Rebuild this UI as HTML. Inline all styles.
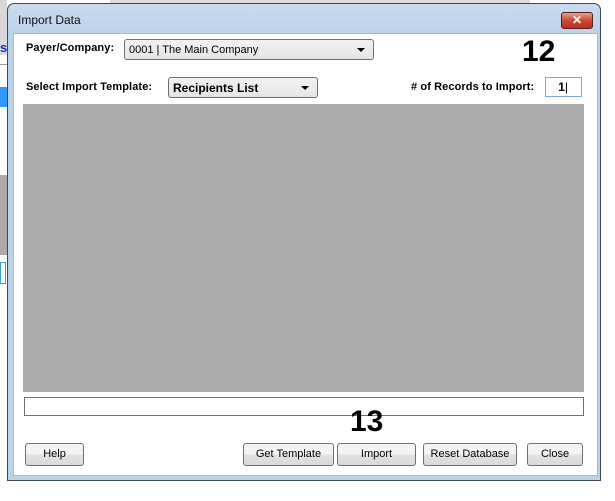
<!DOCTYPE html>
<html><head><style>
body{margin:0;width:615px;height:501px;position:relative;overflow:hidden;background:#fff;font-family:"Liberation Sans",sans-serif;}
.a{position:absolute;}
.win{left:7px;top:3px;width:594px;height:478px;border:1px solid #3a4a5a;border-radius:7px 7px 0 0;background:linear-gradient(#c9dbee,#bcd2ea 30px,#bdd3ea);box-sizing:border-box;}
.content{left:13px;top:33px;width:585px;height:443px;background:#fff;border:1px solid #a6b9cf;box-sizing:border-box;}
.lbl{font-size:11px;font-weight:bold;color:#000;letter-spacing:0.1px;}
.dd{border:1px solid #707070;border-radius:3px;background:linear-gradient(#f2f2f2,#e5e5e5);box-sizing:border-box;font-size:11px;padding:4px 4px;}
.arr{position:absolute;right:8px;top:8px;width:0;height:0;border-left:4px solid transparent;border-right:4px solid transparent;border-top:4px solid #000;}
.btn{border:1px solid #707070;border-radius:3px;background:linear-gradient(#f4f4f4 50%,#e2e2e2 50%,#dadada);box-sizing:border-box;font-size:11px;text-align:center;line-height:21px;height:23px;top:443px;}
.big{font-weight:bold;font-size:30px;color:#000;}
</style></head><body>
<div class="a" style="left:0;top:0;width:7px;height:55px;background:#d8d8d8"></div>
<div class="a" style="left:0;top:40px;width:6px;font-size:13px;color:#1030d0;font-weight:bold">s</div>
<div class="a" style="left:0;top:64px;width:7px;height:22px;background:#fff;border-top:1px solid #999"></div>
<div class="a" style="left:0;top:87px;width:7px;height:20px;background:#3399ff"></div>
<div class="a" style="left:0;top:175px;width:7px;height:80px;background:#aaa"></div>
<div class="a" style="left:0;top:262px;width:6px;height:22px;border:1px solid #3aa0d8;box-sizing:border-box"></div>
<div class="a" style="left:110px;top:0;width:420px;height:4px;background:#ddd"></div>
<div class="a win"></div>
<div class="a" style="left:18px;top:13px;font-size:12px;color:#111">Import Data</div>
<div class="a" style="left:561px;top:12px;width:32px;height:17px;border:1px solid #5a2020;border-radius:3px;background:linear-gradient(#e8a090,#c84a36 50%,#b83020);box-sizing:border-box;color:#fff;font-weight:bold;font-size:12px;text-align:center;line-height:15px">✕</div>
<div class="a content"></div>
<div class="a lbl" style="left:26px;top:42px">Payer/Company:</div>
<div class="a dd" style="left:124px;top:39px;width:250px;height:21px">0001 | The Main Company<div class="arr"></div></div>
<div class="a big" style="left:522px;top:35px">12</div>
<div class="a lbl" style="left:26px;top:81px">Select Import Template:</div>
<div class="a dd" style="left:168px;top:77px;width:150px;height:21px;font-weight:bold;font-size:12px;padding-top:3px">Recipients List<div class="arr"></div></div>
<div class="a lbl" style="left:411px;top:81px">#&nbsp;of Records to Import:</div>
<div class="a" style="left:545px;top:77px;width:37px;height:20px;border:1px solid #7fa6d6;box-sizing:border-box;font-size:12px;font-weight:bold;text-align:right;padding:2px 13px 0 0">1<span style="font-weight:normal">|</span></div>
<div class="a" style="left:23px;top:104px;width:561px;height:288px;background:#ababab"></div>
<div class="a" style="left:24px;top:397px;width:560px;height:19px;border:1px solid #707070;box-sizing:border-box"></div>
<div class="a big" style="left:350px;top:405px">13</div>
<div class="a btn" style="left:25px;width:59px">Help</div>
<div class="a btn" style="left:243px;width:91px">Get Template</div>
<div class="a btn" style="left:337px;width:79px">Import</div>
<div class="a btn" style="left:423px;width:94px">Reset Database</div>
<div class="a btn" style="left:527px;width:56px">Close</div>
</body></html>
